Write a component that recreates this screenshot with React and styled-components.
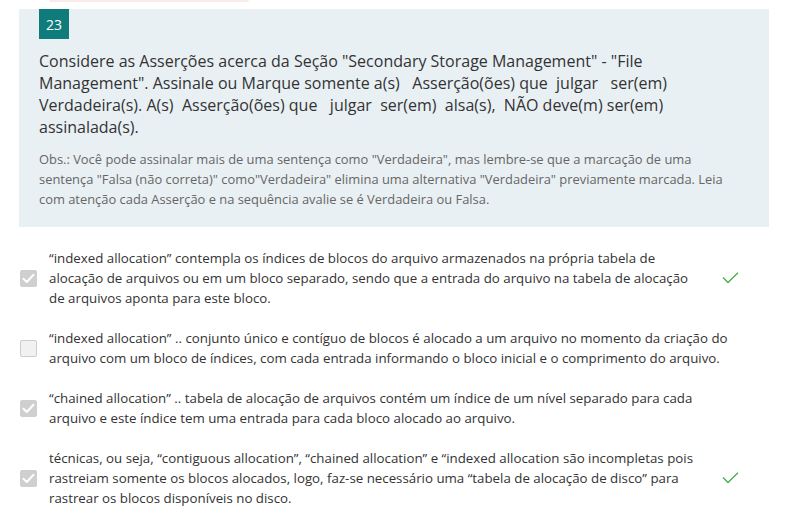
import React from "react";
import styled, { createGlobalStyle } from "styled-components";

const Global = createGlobalStyle`
  html, body { margin: 0; padding: 0; background: #fff; }
  body { font-family: "Open Sans", "Noto Sans", sans-serif; color: #333; }
`;

const Page = styled.div`
  padding: 0 20px 0 19px;
  display: flex;
  flex-direction: column;
`;

const TopEdge = styled.div`
  height: 2px;
  width: 200px;
  margin-left: 30px;
  background: #fbeaea;
  border-radius: 0 0 6px 6px;
`;

const Panel = styled.section`
  margin-top: 7px;
  background: #e9f0f3;
  padding: 0 20px 18px 20px;
`;

const Badge = styled.div`
  width: 30px;
  height: 30px;
  background: #0f7b7b;
  color: #fff;
  font-size: 14px;
  display: flex;
  align-items: center;
  justify-content: center;
`;

const Question = styled.p`
  margin: 11px 0 0;
  font-size: 16px;
  line-height: 22px;
  color: #333;
  white-space: pre-wrap;
`;

const Note = styled.p`
  margin: 11px 0 0;
  font-size: 12.9px;
  line-height: 20px;
  color: #666;
`;

const Options = styled.div`
  display: flex;
  flex-direction: column;
  gap: 20px;
  margin-top: 21px;
`;

const Row = styled.label`
  display: flex;
  align-items: center;
`;

const Box = styled.span`
  flex: none;
  width: 17px;
  height: 17px;
  box-sizing: border-box;
  border-radius: 2px;
  margin: 0 12px 0 1px;
  display: flex;
  align-items: center;
  justify-content: center;
  background: ${(p) => (p.$checked ? "#cfcfcf" : "#f1f1f1")};
  border: 1px solid ${(p) => (p.$checked ? "#cfcfcf" : "#cdcdcd")};
`;

const Text = styled.span`
  flex: 1;
  font-size: 13.3px;
  line-height: 20px;
  color: #333;
  padding-right: ${(p) => (p.$narrow ? "0" : "34px")};
`;

const Mark = styled.span`
  flex: none;
  width: 69px;
  display: flex;
  justify-content: flex-start;
  padding-left: 22px;
  box-sizing: border-box;
`;

const BoxTick = () => (
  <svg width="13" height="11" viewBox="0 0 13 11">
    <path d="M1.5 5.8 L4.8 9 L11.5 1.8" fill="none" stroke="#fff" strokeWidth="2" strokeLinecap="round" strokeLinejoin="round" />
  </svg>
);

const GreenTick = () => (
  <svg width="17" height="12" viewBox="0 0 17 12">
    <path d="M1 5.5 L6 10.5 L16 0.8" fill="none" stroke="#4caf50" strokeWidth="1.4" />
  </svg>
);

const items = [
  {
    checked: true,
    correct: true,
    text: "“indexed allocation” contempla os índices de blocos do arquivo armazenados na própria tabela de alocação de arquivos ou em um bloco separado, sendo que a entrada do arquivo na tabela de alocação de arquivos aponta para este bloco.",
  },
  {
    checked: false,
    correct: false,
    text: "“indexed allocation” .. conjunto único e contíguo de blocos é alocado a um arquivo no momento da criação do arquivo com um bloco de índices, com cada entrada informando o bloco inicial e o comprimento do arquivo.",
  },
  {
    checked: true,
    correct: false,
    text: "“chained allocation” .. tabela de alocação de arquivos contém um índice de um nível separado para cada arquivo e este índice tem uma entrada para cada bloco alocado ao arquivo.",
  },
  {
    checked: true,
    correct: true,
    text: "técnicas, ou seja, “contiguous allocation”, “chained allocation” e “indexed allocation são incompletas pois rastreiam somente os blocos alocados, logo, faz-se necessário uma “tabela de alocação de disco” para rastrear os blocos disponíveis no disco.",
  },
];

export default function App() {
  return (
    <>
      <Global />
      <Page>
        <TopEdge />
        <Panel>
          <Badge>23</Badge>
          <Question>
            {'Considere as Asserções acerca da Seção "Secondary Storage Management" - "File Management". Assinale ou Marque somente a(s)   Asserção(ões) que  julgar   ser(em) Verdadeira(s). A(s)  Asserção(ões) que   julgar  ser(em)  alsa(s),  NÃO deve(m) ser(em) assinalada(s).'}
          </Question>
          <Note>
            Obs.: Você pode assinalar mais de uma sentença como "Verdadeira", mas lembre-se que a marcação de uma sentença "Falsa (não correta)" como"Verdadeira" elimina uma alternativa "Verdadeira" previamente marcada. Leia com atenção cada Asserção e na sequência avalie se é Verdadeira ou Falsa.
          </Note>
        </Panel>
        <Options>
          {items.map((it, i) => (
            <Row key={i}>
              <Box $checked={it.checked}>{it.checked && <BoxTick />}</Box>
              <Text $narrow={it.correct}>{it.text}</Text>
              {it.correct && (
                <Mark>
                  <GreenTick />
                </Mark>
              )}
            </Row>
          ))}
        </Options>
      </Page>
    </>
  );
}
